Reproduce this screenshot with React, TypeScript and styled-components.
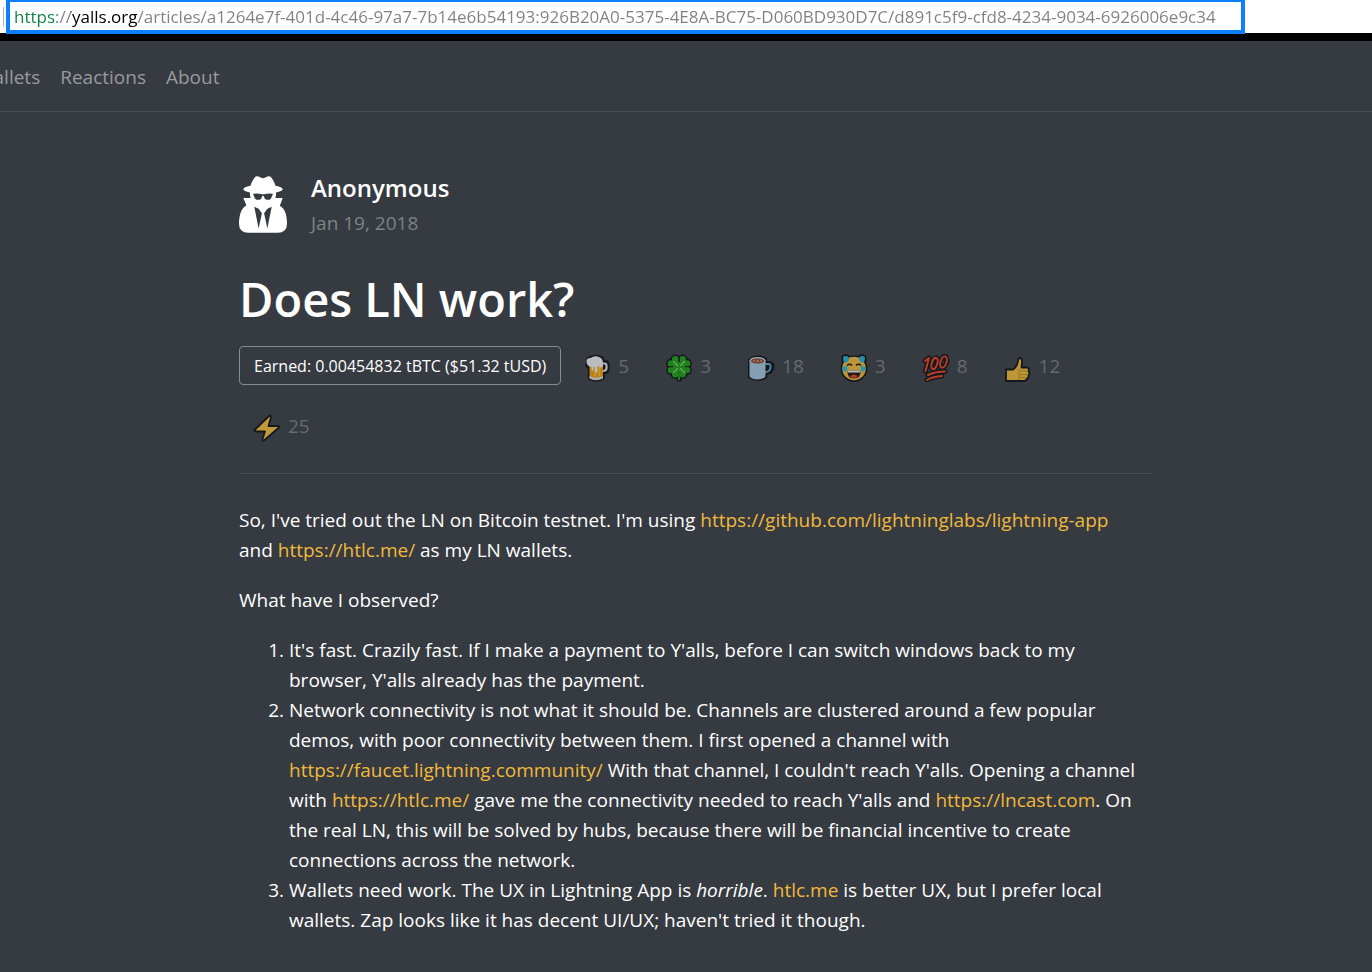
import React from "react";
import styled, { createGlobalStyle } from "styled-components";

const colors = {
  page: "#363a41",
  line: "#4a4e54",
  white: "#ffffff",
  link: "#f0b93c",
  nav: "#989a9d",
  muted: "#7d8288",
  count: "#666a70",
  outline: "#15181b",
  gold: "#bd9638",
};

const GlobalStyle = createGlobalStyle`
  *, *::before, *::after { box-sizing: border-box; }
  body {
    margin: 0;
    background: ${colors.page};
    color: ${colors.white};
    font-family: "Open Sans", "Noto Sans", sans-serif;
    font-size: 19px;
    line-height: 30px;
  }
`;

const AddressBar = styled.div`
  display: flex;
  height: 41px;
  padding: 0 127px 0 3px;
  background: ${colors.white};
  border-bottom: 8px solid #000000;
`;

const Divider = styled.span`
  flex: none;
  width: 1px;
  height: 20px;
  margin: 7px 2px 0 0;
  background: #b4b4b4;
`;

const AddressField = styled.label`
  flex: 1;
  display: flex;
  height: 34px;
  background: ${colors.white};
  border: solid #0a80ff;
  border-width: 2px 4px 4px;
`;

const AddressInput = styled.input`
  flex: 1;
  min-width: 0;
  padding: 0 0 0 4px;
  border: 0;
  outline: 0;
  font-family: inherit;
  font-size: 17px;
  color: transparent;
  background: linear-gradient(
    to right,
    #0b8043 0 47px,
    #808080 47px 61px,
    #000000 61px 127px,
    #808080 127px
  );
  background-clip: text;
  -webkit-background-clip: text;
`;

const Nav = styled.nav`
  display: flex;
  gap: 20px;
  height: 71px;
  padding-top: 21px;
  overflow: hidden;
  border-bottom: 1px solid ${colors.line};
`;

const NavLink = styled.a`
  color: ${colors.nav};
  text-decoration: none;

  &:first-child {
    margin-left: -24px;
  }
`;

const Article = styled.article`
  padding: 58px 220px 30px 239px;
`;

const Author = styled.header`
  display: flex;
  gap: 24px;
`;

const AuthorPicture = styled.svg`
  width: 48px;
  height: 57px;
  margin-top: 6px;
`;

const AuthorName = styled.div`
  font-size: 24px;
  font-weight: 600;
  line-height: 36px;
`;

const PublishDate = styled.time`
  display: block;
  color: ${colors.muted};
  line-height: 34px;
`;

const Title = styled.h1`
  margin: 28px 0 16px;
  font-size: 47px;
  font-weight: 600;
  line-height: 62px;
`;

const Reactions = styled.div`
  display: flex;
  flex-wrap: wrap;
  gap: 21px 8px;
  padding-bottom: 28px;
  border-bottom: 1px solid ${colors.line};
`;

const Earned = styled.button`
  height: 39px;
  padding: 0 14px;
  border: 1px solid #868b91;
  border-radius: 4px;
  background: transparent;
  color: ${colors.white};
  font-family: inherit;
  font-size: 16px;
`;

const Reaction = styled.button`
  display: flex;
  align-items: center;
  gap: 7px;
  height: 39px;
  padding: 0 14px;
  border: 0;
  background: transparent;
  color: ${colors.count};
  font-family: inherit;
  font-size: 19px;

  svg {
    width: 28px;
    height: 28px;
    margin-top: 4px;
  }
`;

const Body = styled.div`
  padding-top: 31px;

  p {
    margin: 0 0 20px;
    padding-right: 30px;
  }

  ol {
    margin: 0;
    padding-left: 50px;
  }

  a {
    color: ${colors.link};
    text-decoration: none;
  }
`;

const Ext = ({ href, children }: { href: string; children: React.ReactNode }) => (
  <a href={href}>{children}</a>
);

const Beer = () => (
  <svg viewBox="0 0 28 28" aria-hidden="true">
    <g stroke={colors.outline} strokeWidth="3.4" strokeLinejoin="round" fill={colors.outline}>
      <path d="M5 5Q12 .5 19 4L20.500 8Q25 7 25 11V15Q25 18.500 20 18.500V24Q13 28 6.500 24V14L4 12Z" />
    </g>
    <path d="M19 9.500h2.500q2 0 2 2V14q0 3-3.500 3h-1" fill="none" stroke="#aeb0b2" strokeWidth="2.200" />
    <path d="M6.500 10H20V24Q13 28 6.500 24Z" fill="#b9821a" />
    <path d="M12 14v8M16.500 14v8" stroke="#cd9926" strokeWidth="1.500" />
    <path d="M6.500 22Q13 25 20 22V24.500Q13 28 6.500 24.500Z" fill="#a9abae" />
    <path d="M3.500 8Q3 4 7.500 4Q12 .8 17 3.500Q20.500 4.500 20 12.500H18.500V13.500H16V12H14.500V18Q13 19.500 12 18V13H10.500V16Q9.500 17.500 8.500 16V13Q4 12.500 3.500 8Z" fill="#babcbe" />
  </svg>
);

const lobes = [
  [10.3, 5.4],
  [17.7, 5.4],
  [22, 9.5],
  [22, 16],
  [17.7, 20.2],
  [10.3, 20.2],
  [6, 16],
  [6, 9.5],
];

const Clover = () => {
  const shape = (
    <>
      {lobes.map(([cx, cy]) => (
        <circle key={`${cx}-${cy}`} cx={cx} cy={cy} r="3.3" />
      ))}
      <path d="M8 7.500H20L22 12.700L20 18H8L6 12.700Z" />
      <path d="M13 15H15V26H13Z" />
    </>
  );
  return (
    <svg viewBox="0 0 28 28" aria-hidden="true">
      <g fill={colors.outline} stroke={colors.outline} strokeWidth="3" strokeLinejoin="round">
        {shape}
      </g>
      <g fill="#218020">{shape}</g>
      <path
        d="M14 1.500V8M14 24V18M2 12.700H8M26 12.700H20"
        stroke={colors.outline}
        strokeWidth="1"
      />
      <path
        d="M8.500 7.500L12.500 11.500M19.500 7.500L15.500 11.500M8.500 18.500L12.500 14.500M19.500 18.500L15.500 14.500"
        stroke="#5cae54"
        strokeWidth="1.400"
        strokeLinecap="round"
      />
      <path d="M14 14V26" stroke="#218020" strokeWidth="1.600" />
    </svg>
  );
};

const Coffee = () => (
  <svg viewBox="0 0 28 28" aria-hidden="true">
    <path
      d="M2.500 6Q10 .5 18.500 5V8.500H22Q26 8.500 26 13Q25.500 19 19 19.500V23Q11 28 2.500 23Z"
      fill={colors.outline}
      stroke={colors.outline}
      strokeWidth="3"
      strokeLinejoin="round"
    />
    <path d="M18 10h3.500q2.500 0 2 3.500q-.5 4.500-5.500 4.500" fill="none" stroke="#5485a0" strokeWidth="2" />
    <path d="M2.500 6.500H18.500V22.500Q16 25.500 10.500 25.500T2.500 22.500Z" fill="#849fb3" />
    <ellipse cx="10.500" cy="6.500" rx="8" ry="3.600" fill="#9db0be" />
    <ellipse cx="10.500" cy="7" rx="6.800" ry="2.800" fill="#754634" />
    <path d="M6.500 7.500l1-1.500M10 8l1-2M13.500 7.500l1-1.500" stroke="#b7a094" strokeWidth="1" />
  </svg>
);

const Joy = () => (
  <svg viewBox="0 0 28 28" aria-hidden="true">
    <circle cx="14" cy="14.500" r="13.300" fill={colors.outline} />
    <path
      d="M3 2.500Q6 .5 8.500 2.500V8H3ZM19.500 2.500Q22 .5 25 2.500V8H19.500Z"
      fill={colors.outline}
      stroke={colors.outline}
      strokeWidth="2.600"
      strokeLinejoin="round"
    />
    <circle cx="14" cy="14.500" r="11.800" fill={colors.gold} />
    <path d="M3 3.500Q3 2 5.500 2T8.500 3Q10 5.500 7 8.500H4Q3 6.500 3 3.500ZM25 3.500Q25 2 22.500 2T19.500 3Q18 5.500 21 8.500H24Q25 6.500 25 3.500Z" fill="#238faf" />
    <path d="M7 12Q2.500 12 2.300 15Q3 18 5.500 17.500Q8 16.500 7 12ZM21 12Q25.500 12 25.700 15Q25 18 22.500 17.500Q20 16.500 21 12Z" fill="#2298b5" />
    <path d="M7 11.500Q9.500 9 12 11.500M16 11.500Q18.500 9 21 11.500" fill="none" stroke={colors.outline} strokeWidth="1.500" />
    <path d="M7.500 16.500H20.500Q21 24.500 14 24.500T7.500 16.500Z" fill="#241b1d" />
    <path d="M7.500 16.500H20.500L20 18.500H8Z" fill="#b9bcbd" />
    <path d="M10 22.500Q14 18.500 18 22.500Q14 25.500 10 22.500Z" fill="#b33a26" />
  </svg>
);

const Hundred = () => {
  const strokes = (
    <>
      <path d="M3 7L7 4L3.500 17" />
      <ellipse cx="12.500" cy="9.500" rx="2.700" ry="5.800" transform="rotate(18 12.500 9.500)" />
      <ellipse cx="21.500" cy="8" rx="3" ry="5.800" transform="rotate(18 21.500 8)" />
      <path d="M6 21Q13 17.500 23 17.500M5 26Q11 22.500 20 22" />
    </>
  );
  return (
    <svg viewBox="0 0 28 28" aria-hidden="true" fill="none" strokeLinecap="round" strokeLinejoin="round">
      <g stroke={colors.outline} strokeWidth="5">{strokes}</g>
      <g stroke="#b93c28" strokeWidth="2">{strokes}</g>
    </svg>
  );
};

const Thumb = () => (
  <svg viewBox="0 0 28 28" aria-hidden="true">
    <path
      d="M2 15.500H9Q13.500 12 14 7Q14 4 16 4Q18.500 4.500 18 9L17.500 13.500H23Q26 14.500 24.500 17.500Q26.500 19 24.500 21.500Q25 24 23 24.500Q22.500 27 20 27H2Z"
      fill={colors.gold}
      stroke={colors.outline}
      strokeWidth="1.800"
      strokeLinejoin="round"
    />
    <path d="M16 17H24M16 20.500H24M16 23.500H23M15 15V26" fill="none" stroke="#9b742b" strokeWidth="1" />
  </svg>
);

const Bolt = () => (
  <svg viewBox="0 0 28 28" aria-hidden="true">
    <path
      d="M16 2L1.500 16Q1 17.500 3 17.500H12L9.500 25Q9.500 27 11 26.500L26 13.500Q26.500 12 25 12H15.500L18 3.500Q18 .5 16 2Z"
      fill="#be9a3b"
      stroke={colors.outline}
      strokeWidth="1.800"
      strokeLinejoin="round"
    />
  </svg>
);

const reactions = [
  { name: "Beer", Icon: Beer, count: 5 },
  { name: "Clover", Icon: Clover, count: 3 },
  { name: "Coffee", Icon: Coffee, count: 18 },
  { name: "Tears of joy", Icon: Joy, count: 3 },
  { name: "Hundred", Icon: Hundred, count: 8 },
  { name: "Thumbs up", Icon: Thumb, count: 12 },
  { name: "Lightning", Icon: Bolt, count: 25 },
];

export default function App() {
  return (
    <>
      <GlobalStyle />
      <AddressBar>
        <Divider />
        <AddressField>
          <AddressInput
            type="text"
            aria-label="Address"
            defaultValue="https://yalls.org/articles/a1264e7f-401d-4c46-97a7-7b14e6b54193:926B20A0-5375-4E8A-BC75-D060BD930D7C/d891c5f9-cfd8-4234-9034-6926006e9c34"
          />
        </AddressField>
      </AddressBar>
      <Nav>
        <NavLink href="#wallets">Wallets</NavLink>
        <NavLink href="#reactions">Reactions</NavLink>
        <NavLink href="#about">About</NavLink>
      </Nav>
      <Article>
        <Author>
          <AuthorPicture viewBox="0 0 1408 1664" aria-hidden="true">
            <path
              fill="#ffffff"
              d="M576 1536l96-448-96-128-128-64zm256 0l128-640-128 64-96 128zm160-1010q-2-4-4-6-10-8-96-8-70 0-167 19-7 2-21 2t-21-2q-97-19-167-19-86 0-96 8-2 2-4 6 2 18 4 27 2 3 7.500 6.500t7.500 10.500q2 4 7.500 20.500t7 20.500 7.500 17 8.500 17 9 14 12 13.500 14 9.500 17.500 8 20.500 4 24.500 2q36 0 59-12.500t32.500-30 14.500-34.500 11.500-29.500 17.500-12.500h12q11 0 17.500 12.500t11.500 29.500 14.500 34.500 32.500 30 59 12.500q13 0 24.500-2t20.500-4 17.500-8 14-9.500 12-13.500 9-14 8.500-17 7.500-17 7-20.500 7.500-20.500q2-7 7.500-10.500t7.500-6.500q2-9 4-27zm416 879q0 121-73 190t-194 69h-874q-121 0-194-69t-73-190q0-61 4.500-118t19-125.500 37.500-123.500 63.500-103.500 93.500-74.500l-90-220h214q-22-64-22-128 0-12 2-32-194-40-194-96 0-57 210-99 17-62 51.500-134t70.500-114q32-37 76-37 30 0 84 31t84 31 84-31 84-31q44 0 76 37 36 42 70.500 114t51.500 134q210 42 210 99 0 56-194 96 7 81-20 160h214l-82 225q63 33 107.500 96.500t65.500 143.500 29 151.500 8 148.500z"
            />
          </AuthorPicture>
          <div>
            <AuthorName>Anonymous</AuthorName>
            <PublishDate dateTime="2018-01-19">Jan 19, 2018</PublishDate>
          </div>
        </Author>
        <Title>Does LN work?</Title>
        <Reactions>
          <Earned type="button">Earned: 0.00454832 tBTC ($51.32 tUSD)</Earned>
          {reactions.map(({ name, Icon, count }) => (
            <Reaction key={name} type="button" aria-label={`${name} ${count}`}>
              <Icon />
              {count}
            </Reaction>
          ))}
        </Reactions>
        <Body>
          <p>
            So, I've tried out the LN on Bitcoin testnet. I'm using{" "}
            <Ext href="https://github.com/lightninglabs/lightning-app">
              https://github.com/lightninglabs/lightning-app
            </Ext>{" "}
            and <Ext href="https://htlc.me/">https://htlc.me/</Ext> as my LN wallets.
          </p>
          <p>What have I observed?</p>
          <ol>
            <li>
              It's fast. Crazily fast. If I make a payment to Y'alls, before I can switch windows back to my
              browser, Y'alls already has the payment.
            </li>
            <li>
              Network connectivity is not what it should be. Channels are clustered around a few popular demos,
              with poor connectivity between them. I first opened a channel with{" "}
              <Ext href="https://faucet.lightning.community/">https://faucet.lightning.community/</Ext> With
              that channel, I couldn't reach Y'alls. Opening a channel with{" "}
              <Ext href="https://htlc.me/">https://htlc.me/</Ext> gave me the connectivity needed to reach
              Y'alls and <Ext href="https://lncast.com">https://lncast.com</Ext>. On the real LN, this will be
              solved by hubs, because there will be financial incentive to create connections across the
              network.
            </li>
            <li>
              Wallets need work. The UX in Lightning App is <em>horrible</em>.{" "}
              <Ext href="https://htlc.me">htlc.me</Ext> is better UX, but I prefer local wallets. Zap looks like
              it has decent UI/UX; haven't tried it though.
            </li>
          </ol>
        </Body>
      </Article>
    </>
  );
}
